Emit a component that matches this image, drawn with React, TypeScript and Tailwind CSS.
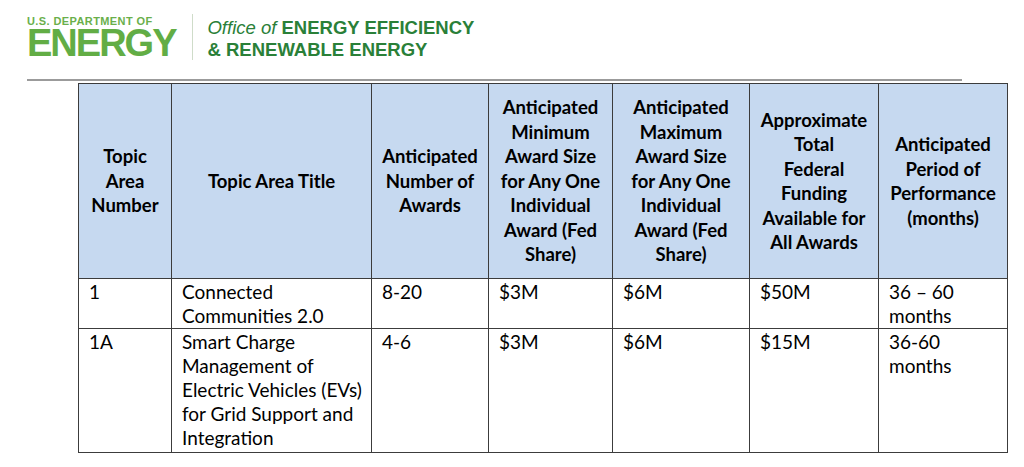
import React from 'react'

const headers: string[][] = [
  ['Topic', 'Area', 'Number'],
  ['Topic Area Title'],
  ['Anticipated', 'Number of', 'Awards'],
  ['Anticipated', 'Minimum', 'Award Size', 'for Any One', 'Individual', 'Award (Fed', 'Share)'],
  ['Anticipated', 'Maximum', 'Award Size', 'for Any One', 'Individual', 'Award (Fed', 'Share)'],
  ['Approximate', 'Total', 'Federal', 'Funding', 'Available for', 'All Awards'],
  ['Anticipated', 'Period of', 'Performance', '(months)'],
]

const rows: { cells: string[][]; h: string }[] = [
  {
    h: 'h-[50px]',
    cells: [['1'], ['Connected', 'Communities 2.0'], ['8-20'], ['$3M'], ['$6M'], ['$50M'], ['36 – 60', 'months']],
  },
  {
    h: 'h-[124px]',
    cells: [
      ['1A'],
      ['Smart Charge', 'Management of', 'Electric Vehicles (EVs)', 'for Grid Support and', 'Integration'],
      ['4-6'],
      ['$3M'],
      ['$6M'],
      ['$15M'],
      ['36-60', 'months'],
    ],
  },
]

const colWidths = [93, 200, 117, 124, 137, 129, 129]

function Lines({ lines }: { lines: string[] }) {
  return (
    <>
      {lines.map((l, i) => (
        <div key={i} className="whitespace-nowrap">{l}</div>
      ))}
    </>
  )
}

export default function App() {
  return (
    <div className="min-h-[467px] w-[1024px] bg-white" style={{ fontFamily: 'Lato, "Liberation Sans", sans-serif' }}>
      {/* DOE / EERE logo */}
      <div className="flex items-start pl-[27px] pt-[17px]" style={{ fontFamily: '"Liberation Sans", Arial, sans-serif' }}>
        <div className="flex flex-col">
          <div className="text-[11px] font-bold leading-[8px] tracking-[0.4px] text-[#6aaf4b]">U.S. DEPARTMENT OF</div>
          <div className="mt-[3px] text-[38px] font-bold leading-[30px] tracking-[-2px] text-[#62ad45]">ENERGY</div>
        </div>
        <div className="ml-[17px] mt-[-3px] h-[46px] w-px bg-[#cfdcc9]" />
        <div className="ml-[14px] flex flex-col text-[18.5px] leading-[22px] text-[#2a8038]">
          <div className="whitespace-nowrap">
            <span className="italic">Office of</span> <span className="font-bold">ENERGY EFFICIENCY</span>
          </div>
          <div className="whitespace-nowrap font-bold">&amp; RENEWABLE ENERGY</div>
        </div>
      </div>

      {/* grey rule */}
      <div className="ml-[27px] mt-[18px] h-[2px] w-[935px] bg-[#9b9b9b]" />

      {/* funding table */}
      <table className="ml-[78px] mt-[2px] w-[929px] table-fixed border-collapse text-black">
        <colgroup>
          {colWidths.map((w, i) => (
            <col key={i} style={{ width: `${w}px` }} />
          ))}
        </colgroup>
        <thead>
          <tr className="h-[195px] bg-[#c6d9f0]">
            {headers.map((h, i) => (
              <th key={i} className="border border-[#3c3c3c] px-1 text-center align-middle text-[18.5px] font-bold leading-[24.5px]">
                <div className="flex flex-col items-center">
                  <Lines lines={h} />
                </div>
              </th>
            ))}
          </tr>
        </thead>
        <tbody>
          {rows.map((r, ri) => (
            <tr key={ri} className={r.h}>
              {r.cells.map((c, ci) => (
                <td key={ci} className="border border-[#3c3c3c] pl-[10px] pr-1 pt-px align-top text-[19px] leading-[24px]">
                  <Lines lines={c} />
                </td>
              ))}
            </tr>
          ))}
        </tbody>
      </table>
    </div>
  )
}
